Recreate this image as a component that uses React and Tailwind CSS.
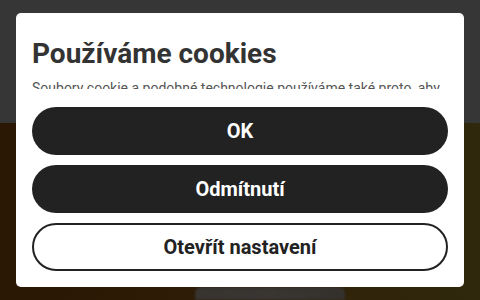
import React from "react";

export default function App() {
  return (
    <div className="relative w-[480px] h-[300px] overflow-hidden" style={{ fontFamily: "Roboto, 'Liberation Sans', sans-serif" }}>
      <div className="h-[123px] bg-[#363636]" />
      <div className="h-[177px] bg-[linear-gradient(90deg,#2a1704_0%,#2e1c06_40%,#30240a_75%,#2f280c_100%)] flex items-end pl-[195px]">
        <div className="w-[150px] h-[13px] bg-[linear-gradient(90deg,#37332e,#393532,#34302b)] rounded-t-[6px] blur-[1px]" />
      </div>
      <div className="absolute left-[16px] top-[13px] w-[448px] h-[274px] bg-white rounded-[5px] flex flex-col px-[16px] pb-[16px]">
        <h1 className="mt-[24px] text-[28px] leading-[34px] font-bold text-[#333333]">Používáme cookies</h1>
        <div className="mt-[7px] h-[11px] overflow-hidden">
          <p className="text-[14px] leading-[20px] text-[#555555] whitespace-nowrap">Soubory cookie a podobné technologie používáme také proto, aby</p>
        </div>
        <div className="mt-[18px] flex flex-col gap-[10px]">
          <button className="h-[48px] w-full rounded-full bg-[#222222] text-white text-[20px] font-bold">OK</button>
          <button className="h-[48px] w-full rounded-full bg-[#222222] text-white text-[20px] font-bold">Odmítnutí</button>
          <button className="h-[48px] w-full rounded-full bg-white border-2 border-[#222222] text-[#222222] text-[20px] font-bold">Otevřít nastavení</button>
        </div>
      </div>
    </div>
  );
}
